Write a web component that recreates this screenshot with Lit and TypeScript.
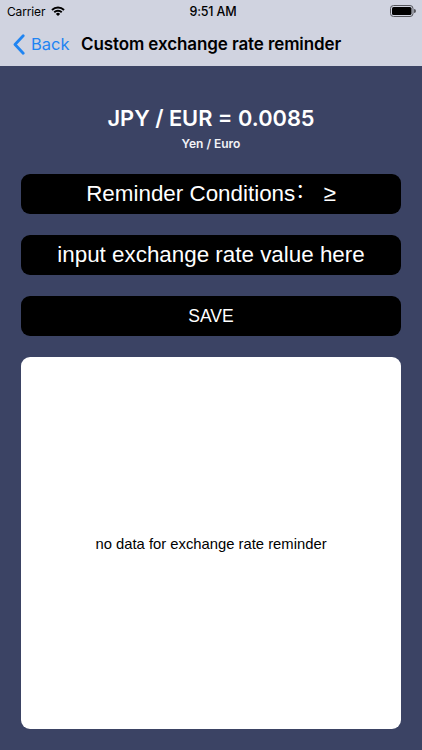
import { LitElement, html, css } from "lit";
import { customElement } from "lit/decorators.js";

@customElement("app-root")
export class AppRoot extends LitElement {
  static styles = css`
    :host {
      display: flex;
      flex-direction: column;
      width: 422px;
      height: 750px;
      overflow: hidden;
      background: #3b4364;
      font-family: "Inter", "Liberation Sans", Arial, sans-serif;
      color: #fff;
    }
    .top {
      height: 66px;
      flex: none;
      background: #d0d3e0;
      color: #000;
      display: flex;
      flex-direction: column;
    }
    .status {
      height: 22px;
      display: grid;
      grid-template-columns: 1fr auto 1fr;
      align-items: center;
      padding: 0 6px 0 7px;
      font-size: 12px;
      letter-spacing: -0.15px;
    }
    .status-left { display: flex; align-items: center; gap: 6px; font-weight: 400; }
    .status-right { display: flex; justify-content: flex-end; }
    .time { font-size: 12.5px; font-weight: 500; padding-left: 3px; }
    .nav {
      height: 44px;
      display: flex;
      align-items: center;
      padding-left: 13px;
    }
    .back {
      display: flex;
      align-items: center;
      gap: 6px;
      color: #1f84f2;
      font-size: 16.5px;
      width: 68px;
      flex: none;
    }
    .title { font-size: 17px; font-weight: 600; white-space: nowrap; letter-spacing: -0.1px; }
    .content {
      flex: 1;
      display: flex;
      flex-direction: column;
      padding: 0 21px 21px;
      min-height: 0;
    }
    .rate {
      margin-top: 38px;
      text-align: center;
      font-size: 21.8px;
      line-height: 28px;
      font-weight: 600;
    }
    .sub {
      margin-top: 5px;
      text-align: center;
      font-size: 12px;
      line-height: 14px;
      font-weight: 600;
      color: #f2f3f7;
    }
    .buttons {
      margin-top: 22.5px;
      display: flex;
      flex-direction: column;
      gap: 20.5px;
    }
    .btn {
      height: 40.5px;
      background: #000;
      border-radius: 9px;
      display: flex;
      align-items: center;
      justify-content: center;
      font-family: "Liberation Sans", Arial, sans-serif;
      font-size: 22.4px;
      white-space: pre;
    }
    .btn.small { font-size: 17.5px; padding-top: 2px; box-sizing: border-box; }
    .colon {
      font-family: "Noto Sans CJK SC", sans-serif;
      line-height: 1;
      margin-top: -7px;
      margin-right: 2px;
      font-size: 20px;
    }
    .card {
      margin-top: 20.5px;
      flex: 1;
      background: #fff;
      border-radius: 9px;
      color: #000;
      display: flex;
      align-items: center;
      justify-content: center;
      padding-top: 2px;
      box-sizing: border-box;
      font-family: "Liberation Sans", Arial, sans-serif;
      font-size: 14.8px;
    }
    svg { display: block; }
  `;

  render() {
    return html`
      <div class="top">
        <div class="status">
          <div class="status-left">
            <span>Carrier</span>
            <svg width="14" height="10" viewBox="0 0 14 10">
              <path d="M0.3 3.3 A9.6 9.6 0 0 1 13.7 3.3 L12.4 4.7 A7.7 7.7 0 0 0 1.6 4.7 Z" fill="#000"/>
              <path d="M2.6 5.6 A6.3 6.3 0 0 1 11.4 5.6 L10.1 7 A4.4 4.4 0 0 0 3.9 7 Z" fill="#000"/>
              <path d="M4.9 7.9 A3 3 0 0 1 9.1 7.9 L7 10 Z" fill="#000"/>
            </svg>
          </div>
          <div class="time">9:51 AM</div>
          <div class="status-right">
            <svg width="26" height="12" viewBox="0 0 26 12">
              <rect x="0.5" y="0.5" width="22.5" height="11" rx="3" fill="none" stroke="#55565c" stroke-width="1"/>
              <rect x="2" y="2" width="19.5" height="8" rx="1.6" fill="#000"/>
              <path d="M24 4 a2 2 0 0 1 0 4 Z" fill="#55565c"/>
            </svg>
          </div>
        </div>
        <div class="nav">
          <div class="back">
            <svg width="12" height="21" viewBox="0 0 12 21">
              <path d="M10.2 1.8 L2 10.5 L10.2 19.2" fill="none" stroke="#1f84f2" stroke-width="2.8" stroke-linecap="round" stroke-linejoin="round"/>
            </svg>
            <span>Back</span>
          </div>
          <div class="title">Custom exchange rate reminder</div>
        </div>
      </div>
      <div class="content">
        <div class="rate">JPY / EUR = 0.0085</div>
        <div class="sub">Yen / Euro</div>
        <div class="buttons">
          <div class="btn"><span>Reminder Conditions</span><span class="colon">：</span><span> ≥</span></div>
          <div class="btn">input exchange rate value here</div>
          <div class="btn small">SAVE</div>
        </div>
        <div class="card">no data for exchange rate reminder</div>
      </div>
    `;
  }
}
